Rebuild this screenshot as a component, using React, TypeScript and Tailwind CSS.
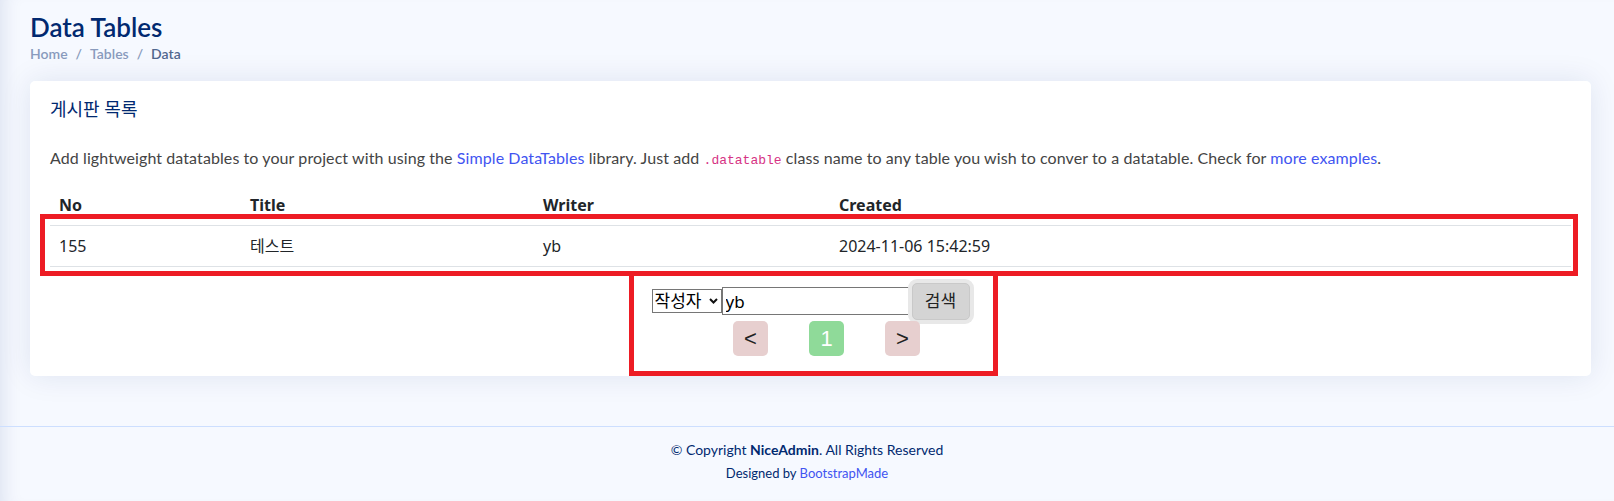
import React from 'react';

const rows = [{ no: 155, title: '테스트', writer: 'yb', created: '2024-11-06 15:42:59' }];

const kr = "font-['Noto_Sans','Noto_Sans_CJK_KR',sans-serif]";

export default function App() {
  return (
    <div className="min-h-[501px] bg-[#f6f9ff] font-['Lato','Noto_Sans_CJK_KR',sans-serif] shadow-[inset_18px_0_20px_-16px_rgba(1,41,112,0.12)]">
      <main className="pt-[10px] pl-[30px] pr-[23px] pb-[50px]">
        <div className="h-[71px]">
          <h1 className="font-['Lato',sans-serif] text-[26px] leading-[34px] font-semibold text-[#012970]">Data Tables</h1>
          <nav className="font-['Lato',sans-serif] text-[14px] leading-[20px] font-semibold text-[#899bbd] flex gap-[8px]">
            <span>Home</span>
            <span>/</span>
            <span>Tables</span>
            <span>/</span>
            <span className="text-[#51678f]">Data</span>
          </nav>
        </div>

        {/* Card */}
        <div className="relative bg-white rounded-[5px] shadow-[0_0_30px_rgba(1,41,112,0.1)] px-[20px] pb-[20px]">
          <h5 className={`${kr} pt-[17px] pb-[26px] text-[18px] leading-[22px] text-[#012970]`}>게시판 목록</h5>
          <p className="h-[24px] text-[16px] leading-[24px] tracking-[0.09px] text-[#444444] mb-[16px] overflow-visible">
            Add lightweight datatables to your project with using the{' '}
            <span className="text-[#4154f1]">Simple DataTables</span> library. Just add{' '}
            <code className="font-['Liberation_Mono',monospace] text-[13px] leading-none tracking-normal text-[#d63384]">.datatable</code> class name to any table you
            wish to conver to a datatable. Check for <span className="text-[#4154f1]">more examples</span>.
          </p>

          <table className={`${kr} w-full text-[16px] text-[#212529] border-collapse`}>
            <thead>
              <tr className="h-[39px] border-b border-[#dee2e6] text-left">
                <th className="w-[192px] px-[9px] font-bold">No</th>
                <th className="w-[293px] px-[8px] font-bold">Title</th>
                <th className="w-[296px] px-[8px] font-bold">Writer</th>
                <th className="px-[8px] font-bold">Created</th>
              </tr>
            </thead>
            <tbody>
              {rows.map(r => (
                <tr key={r.no} className="h-[41px] border-b border-[#dee2e6]">
                  <td className="px-[9px]">{r.no}</td>
                  <td className="px-[8px]">{r.title}</td>
                  <td className="px-[8px]">{r.writer}</td>
                  <td className="px-[8px]">{r.created}</td>
                </tr>
              ))}
            </tbody>
          </table>

          {/* search + paging */}
          <div className={`${kr} mt-[16px] flex flex-col items-center`}>
            <form className="flex items-center" onSubmit={e => e.preventDefault()}>
              <div className="relative">
                <select className="appearance-none w-[70px] h-[24px] border border-[#767676] bg-white text-[17px] leading-[22px] pl-[2px] text-black rounded-none">
                  <option>작성자</option>
                  <option>제목</option>
                </select>
                <svg className="pointer-events-none absolute right-[4px] top-[9px]" width="9" height="6" viewBox="0 0 9 6">
                  <path d="M1 1l3.5 3.5L8 1" fill="none" stroke="#111" strokeWidth="2" />
                </svg>
              </div>
              <input defaultValue="yb" className="w-[190px] h-[28px] border border-[#767676] bg-white text-[17px] pl-[3px] text-black outline-none" />
              <button type="submit" className="w-[58px] h-[37px] rounded-[5px] bg-[#d4d4d4] border border-[#c9c9c9] shadow-[0_0_0_4px_#e8e8e8] text-[17px] text-[#222]">
                검색
              </button>
            </form>
            <ul className="flex gap-[41px] pl-[32px] mt-[1px] font-['Liberation_Sans',sans-serif]">
              <li className="w-[35px] h-[35px] rounded-[5px] bg-[#e7cfcf] flex items-center justify-center text-[22px] text-[#222]">&lt;</li>
              <li className="w-[35px] h-[35px] rounded-[5px] bg-[#8fda99] flex items-center justify-center text-[22px] text-white">1</li>
              <li className="w-[35px] h-[35px] rounded-[5px] bg-[#e7cfcf] flex items-center justify-center text-[22px] text-[#222]">&gt;</li>
            </ul>
          </div>

          {/* annotation boxes */}
          <div className="pointer-events-none absolute left-[10px] top-[133px] w-[1538px] h-[62px] border-[5px] border-[#ed1c24]" />
          <div className="pointer-events-none absolute left-[599px] top-[190px] w-[369px] h-[105px] border-[5px] border-[#ed1c24]" />
        </div>
      </main>

      <footer className="border-t border-[#cddfff] pt-[13px] pb-[16px] text-center text-[#012970] font-['Lato',sans-serif]">
        <div className="text-[14px] leading-[20px]">
          © Copyright <strong className="font-bold">NiceAdmin</strong>. All Rights Reserved
        </div>
        <div className="text-[13px] leading-[20px] mt-[3px]">
          Designed by <span className="text-[#4154f1]">BootstrapMade</span>
        </div>
      </footer>
    </div>
  );
}
